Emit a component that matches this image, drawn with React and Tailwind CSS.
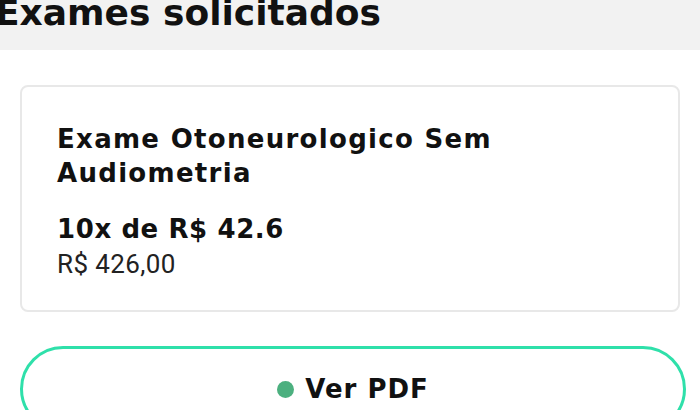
export default function App() {
  return (
    <div className="h-[410px] w-[700px] overflow-hidden bg-white font-['DejaVu_Sans',sans-serif] text-[#111]">
      {/* Header */}
      <div className="h-[50px] overflow-hidden bg-[#f2f2f2]">
        <h1 className="-ml-[5px] -mt-[10px] text-[36px] font-bold leading-[46px]">
          Exames solicitados
        </h1>
      </div>

      {/* Exam card */}
      <div className="mx-[20px] mt-[35px] h-[227px] rounded-[8px] border-2 border-[#e8e8e8] px-[35px] pt-[35px]">
        <h2 className="text-[26px] font-bold leading-[34px] tracking-[1.3px]">
          Exame Otoneurologico Sem Audiometria
        </h2>
        <p className="mt-[22px] text-[26px] font-bold leading-[34px] tracking-[0.6px]">10x de R$ 42.6</p>
        <p className="font-['Roboto',sans-serif] text-[26px] leading-[36px] tracking-[0.4px] text-[#222]">R$ 426,00</p>
      </div>

      {/* PDF button */}
      <button className="mx-[20px] mt-[34px] flex h-[86px] w-[666px] items-center justify-center gap-[11px] rounded-full border-[3px] border-[#2fe0aa] bg-white">
        <span className="h-[17px] w-[17px] rounded-full bg-[#4cb07f]"></span>
        <span className="text-[26px] font-bold tracking-[1px]">Ver PDF</span>
      </button>
    </div>
  )
}
